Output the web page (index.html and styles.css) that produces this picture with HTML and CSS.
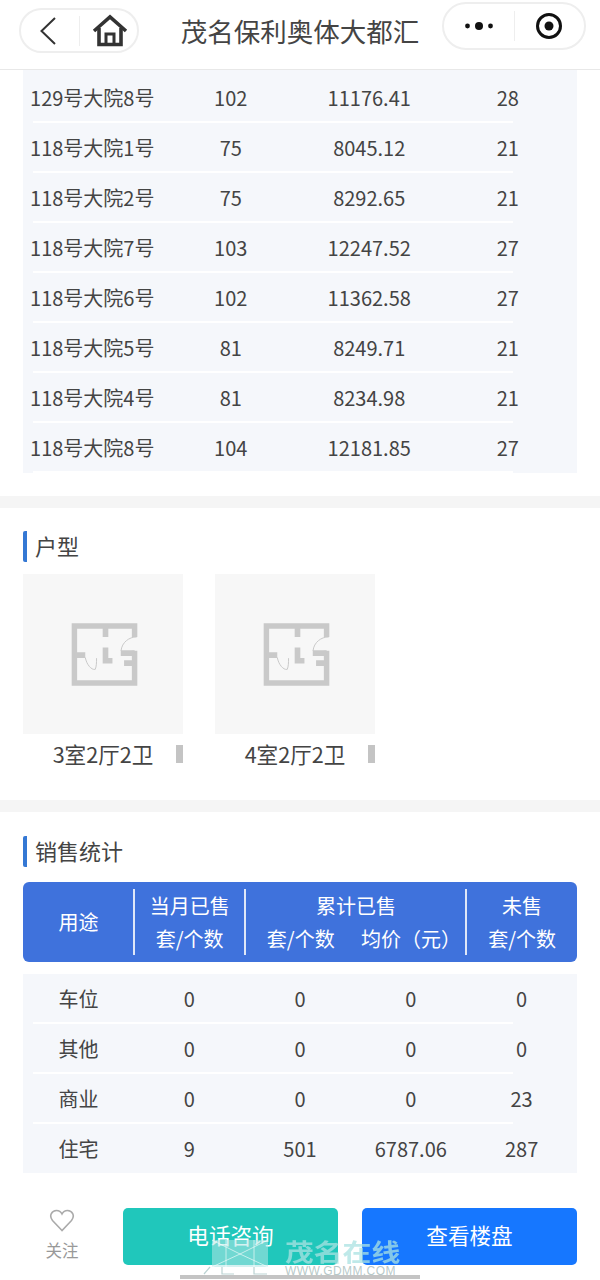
FILE: index.html
```html
<!DOCTYPE html>
<html lang="zh-CN">

<head>
    <meta charset="UTF-8">
    <meta name="viewport" content="width=device-width, initial-scale=1.0">
    <title>茂名保利奥体大都汇</title>
    <link rel="stylesheet" href="styles.css">
</head>

<body>
    <div class="page">
        <header class="nav">
            <div class="capsule_l">
                <span class="cap_btn">
                    <svg class="ico_back" width="18" height="30" viewBox="0 0 18 30"><path d="M16 2 L2.5 15 L16 28" fill="none" stroke="#333" stroke-width="2"/></svg>
                </span>
                <span class="cap_line"></span>
                <span class="cap_btn">
                    <svg class="ico_home" width="36" height="33" viewBox="0 0 36 33"><path d="M2 17 L18 3 L34 17" fill="none" stroke="#333" stroke-width="3.6"/><path d="M7 14 V30.5 H29 V14" fill="none" stroke="#333" stroke-width="3.6"/><path d="M14 30.5 V20 H22 V30.5" fill="none" stroke="#333" stroke-width="3"/></svg>
                </span>
            </div>
            <h1 class="nav_title">茂名保利奥体大都汇</h1>
            <div class="capsule_r">
                <span class="cap_btn">
                    <svg width="30" height="10" viewBox="0 0 30 10"><circle cx="3.5" cy="5" r="2.4" fill="#111"/><circle cx="15" cy="5" r="4" fill="#111"/><circle cx="26.5" cy="5" r="2.4" fill="#111"/></svg>
                </span>
                <span class="cap_line"></span>
                <span class="cap_btn">
                    <svg width="28" height="28" viewBox="0 0 28 28"><circle cx="14" cy="14" r="11.5" fill="none" stroke="#111" stroke-width="3"/><circle cx="14" cy="14" r="4.5" fill="#111"/></svg>
                </span>
            </div>
        </header>

        <section class="block block_top">
            <div class="tbl">
                <div class="row"><span>129号大院8号</span><span>102</span><span>11176.41</span><span>28</span></div>
                <div class="row"><span>118号大院1号</span><span>75</span><span>8045.12</span><span>21</span></div>
                <div class="row"><span>118号大院2号</span><span>75</span><span>8292.65</span><span>21</span></div>
                <div class="row"><span>118号大院7号</span><span>103</span><span>12247.52</span><span>27</span></div>
                <div class="row"><span>118号大院6号</span><span>102</span><span>11362.58</span><span>27</span></div>
                <div class="row"><span>118号大院5号</span><span>81</span><span>8249.71</span><span>21</span></div>
                <div class="row"><span>118号大院4号</span><span>81</span><span>8234.98</span><span>21</span></div>
                <div class="row"><span>118号大院8号</span><span>104</span><span>12181.85</span><span>27</span></div>
            </div>
        </section>

        <div class="band"></div>

        <section class="block block_huxing">
            <h2 class="title">户型</h2>
            <div class="huxing">
                <div class="hx_item">
                    <div class="hx_pic">
                        <svg class="plan" width="67" height="63" viewBox="0 0 200 190"><use href="#plan"/></svg>
                    </div>
                    <div class="hx_name"><span>3室2厅2卫</span><i class="hx_tag"></i></div>
                </div>
                <div class="hx_item">
                    <div class="hx_pic">
                        <svg class="plan" width="67" height="63" viewBox="0 0 200 190"><use href="#plan"/></svg>
                    </div>
                    <div class="hx_name"><span>4室2厅2卫</span><i class="hx_tag"></i></div>
                </div>
            </div>
        </section>

        <div class="band"></div>

        <section class="block block_sale">
            <h2 class="title">销售统计</h2>
            <div class="sale_head">
                <div class="sh_col sh_single">用途</div>
                <div class="sh_col">
                    <div>当月已售</div>
                    <div>套/个数</div>
                </div>
                <div class="sh_col sh_wide">
                    <div>累计已售</div>
                    <div class="sh_pair"><span>套/个数</span><span>均价（元）</span></div>
                </div>
                <div class="sh_col">
                    <div>未售</div>
                    <div>套/个数</div>
                </div>
            </div>
            <div class="tbl tbl_sale">
                <div class="row row5"><span>车位</span><span>0</span><span>0</span><span>0</span><span>0</span></div>
                <div class="row row5"><span>其他</span><span>0</span><span>0</span><span>0</span><span>0</span></div>
                <div class="row row5"><span>商业</span><span>0</span><span>0</span><span>0</span><span>23</span></div>
                <div class="row row5 row_last"><span>住宅</span><span>9</span><span>501</span><span>6787.06</span><span>287</span></div>
            </div>
        </section>

        <footer class="bar">
            <div class="fav">
                <svg width="26" height="23" viewBox="0 0 26 23"><path d="M13 21.5 L3.5 11.5 C-0.5 6.5 3 1.5 7.5 1.5 C10 1.5 12 3 13 5 C14 3 16 1.5 18.5 1.5 C23 1.5 26.5 6.5 22.5 11.5 Z" fill="none" stroke="#aaa" stroke-width="1.6"/></svg>
                <span>关注</span>
            </div>
            <a class="btn btn_green">电话咨询</a>
            <a class="btn btn_blue">查看楼盘</a>
        </footer>

        <!-- 水印 -->
        <div class="mark">
            <svg width="72" height="38" viewBox="0 0 72 38">
                <path d="M9 2 H65 V29 H9 Z" fill="rgba(180,230,230,.55)"/>
                <path d="M9 2 L37 16 L65 2 M9 29 L37 16 L65 29 M23 2 V29 M51 2 V29" fill="none" stroke="rgba(255,255,255,.6)" stroke-width="1"/>
                <path d="M19 29 V36 H31 M51 29 V36 H64 M1 36 L7 29" fill="none" stroke="rgba(180,205,205,.9)" stroke-width="1.2"/>
            </svg>
            <div class="mark_txt">
                <div class="mark_cn">茂名在线</div>
                <div class="mark_en">WWW.GDMM.COM</div>
            </div>
        </div>
        <div class="home_bar"></div>
    </div>

    <svg class="defs" width="0" height="0">
        <symbol id="plan" viewBox="0 0 200 190">
            <g fill="none" stroke="#c9c9c9" stroke-width="17">
                <path d="M191 84 V181 H9 V9 H191 V42"/>
                <path d="M103 9 V42 M103 74 V114 H124 M9 97 H42 M191 91 H149 M191 121 H159"/>
            </g>
            <path d="M197 42 C175 42 152 58 150 84 M42 104 C46 125 60 142 72 140 C76 130 76 120 76 106" fill="none" stroke="#c9c9c9" stroke-width="3"/>
        </symbol>
    </svg>
</body>

</html>
```

FILE: styles.css
```css
* {
    margin: 0;
    padding: 0;
    box-sizing: border-box;
}

body {
    background-color: #fff;
    color: #444;
    font-family: "Noto Sans CJK SC", "Noto Sans", sans-serif;
}

.page {
    position: relative;
    display: flex;
    flex-direction: column;
    width: 600px;
    height: 1280px;
    overflow: hidden;
}

.defs {
    position: absolute;
}

/* 顶部导航 */
.nav {
    position: relative;
    flex: none;
    height: 70px;
    border-bottom: 1px solid #e8e8e8;
}

.capsule_l,
.capsule_r {
    position: absolute;
    display: flex;
    align-items: center;
    border: 2px solid #eee;
    border-radius: 24px;
    background-color: #fff;
}

.capsule_l {
    top: 8px;
    left: 19px;
    width: 120px;
    height: 45px;
}

.capsule_r {
    top: 2px;
    left: 442px;
    width: 144px;
    height: 48px;
}

.cap_btn {
    display: flex;
    flex: 1;
    align-items: center;
    justify-content: center;
}

.ico_back {
    margin-right: 4px;
}

.ico_home {
    margin-left: 3px;
}

.cap_line {
    flex: none;
    width: 1px;
    height: 30px;
    background-color: #eee;
}

.nav_title {
    padding-top: 12px;
    font-size: 26.5px;
    font-weight: 400;
    line-height: 38px;
    text-align: center;
}

/* 表格 */
.block {
    flex: none;
    padding: 0 23px;
}

.tbl {
    padding-top: 3px;
    background-color: #f5f7fb;
}

.row {
    display: grid;
    grid-template-columns: repeat(4, 1fr);
    height: 50px;
    background: linear-gradient(#fff, #fff) no-repeat 10px 100% / 480px 2px;
    font-size: 20px;
    line-height: 50px;
    text-align: center;
}

.row5 {
    grid-template-columns: repeat(5, 1fr);
}

.row_last {
    background: none;
}

.band {
    flex: none;
    height: 12px;
    margin-top: 23px;
    background-color: #f5f5f5;
}

.title {
    height: 31px;
    padding-left: 8px;
    border-left: 4px solid #3478d4;
    border-radius: 2px;
    font-size: 22px;
    font-weight: 400;
    line-height: 29px;
}

/* 户型 */
.block_huxing {
    padding-top: 23px;
}

.huxing {
    display: flex;
    gap: 32px;
    margin-top: 12px;
}

.hx_item {
    width: 160px;
}

.hx_pic {
    display: flex;
    align-items: center;
    justify-content: center;
    height: 160px;
    background-color: #f7f7f7;
}

.plan {
    margin-left: 3px;
    filter: blur(.7px);
}

.hx_name {
    position: relative;
    font-size: 21.6px;
    line-height: 40px;
    text-align: center;
}

.hx_tag {
    position: absolute;
    top: 11px;
    right: 0;
    width: 7px;
    height: 18px;
    background-color: #c4c4c4;
}

.block_huxing + .band {
    margin-top: 26px;
}

/* 销售统计 */
.block_sale {
    padding-top: 24px;
}

.sale_head {
    display: grid;
    grid-template-columns: repeat(5, 1fr);
    height: 80px;
    margin-top: 15px;
    padding: 7px 0;
    border-radius: 6px;
    background-color: #3f72dc;
    color: #fff;
    font-size: 20px;
    line-height: 33px;
    text-align: center;
}

.sh_col + .sh_col {
    margin-left: -1px;
    border-left: 2px solid #dfe7f8;
}

.sh_single {
    line-height: 66px;
}

.sh_wide {
    grid-column: span 2;
}

.sh_pair {
    display: grid;
    grid-template-columns: 1fr 1fr;
}

.tbl_sale {
    height: 199px;
    margin-top: 12px;
    padding-top: 0;
}

/* 底部按钮 */
.bar {
    position: absolute;
    bottom: 15px;
    left: 23px;
    display: flex;
    align-items: center;
    width: 554px;
    height: 57px;
}

.fav {
    display: flex;
    flex: none;
    flex-direction: column;
    align-items: center;
    width: 78px;
    margin-top: 4px;
    margin-right: 22px;
    color: #999;
    font-size: 16.5px;
    line-height: 36px;
}

.btn {
    display: block;
    width: 215px;
    height: 57px;
    border-radius: 5px;
    color: #fff;
    font-size: 21.6px;
    line-height: 54px;
    text-align: center;
}

.btn_green {
    margin-right: 24px;
    background-color: #20c7bb;
}

.btn_blue {
    background-color: #1677ff;
}

/* 水印和底部条 */
.mark {
    position: absolute;
    top: 1238px;
    left: 203px;
    display: flex;
    gap: 10px;
}

.mark_cn {
    color: rgba(170, 225, 225, .75);
    font-size: 24px;
    font-weight: 700;
    line-height: 26px;
    transform: scaleX(1.2);
    transform-origin: left;
}

.mark_en {
    margin-top: 1px;
    color: rgba(170, 190, 190, .85);
    font-family: "Liberation Sans", sans-serif;
    font-size: 12px;
    letter-spacing: .4px;
    line-height: 12px;
}

.home_bar {
    position: absolute;
    top: 1275px;
    left: 180px;
    width: 240px;
    height: 4px;
    background-color: #c4c4c4;
}
```
